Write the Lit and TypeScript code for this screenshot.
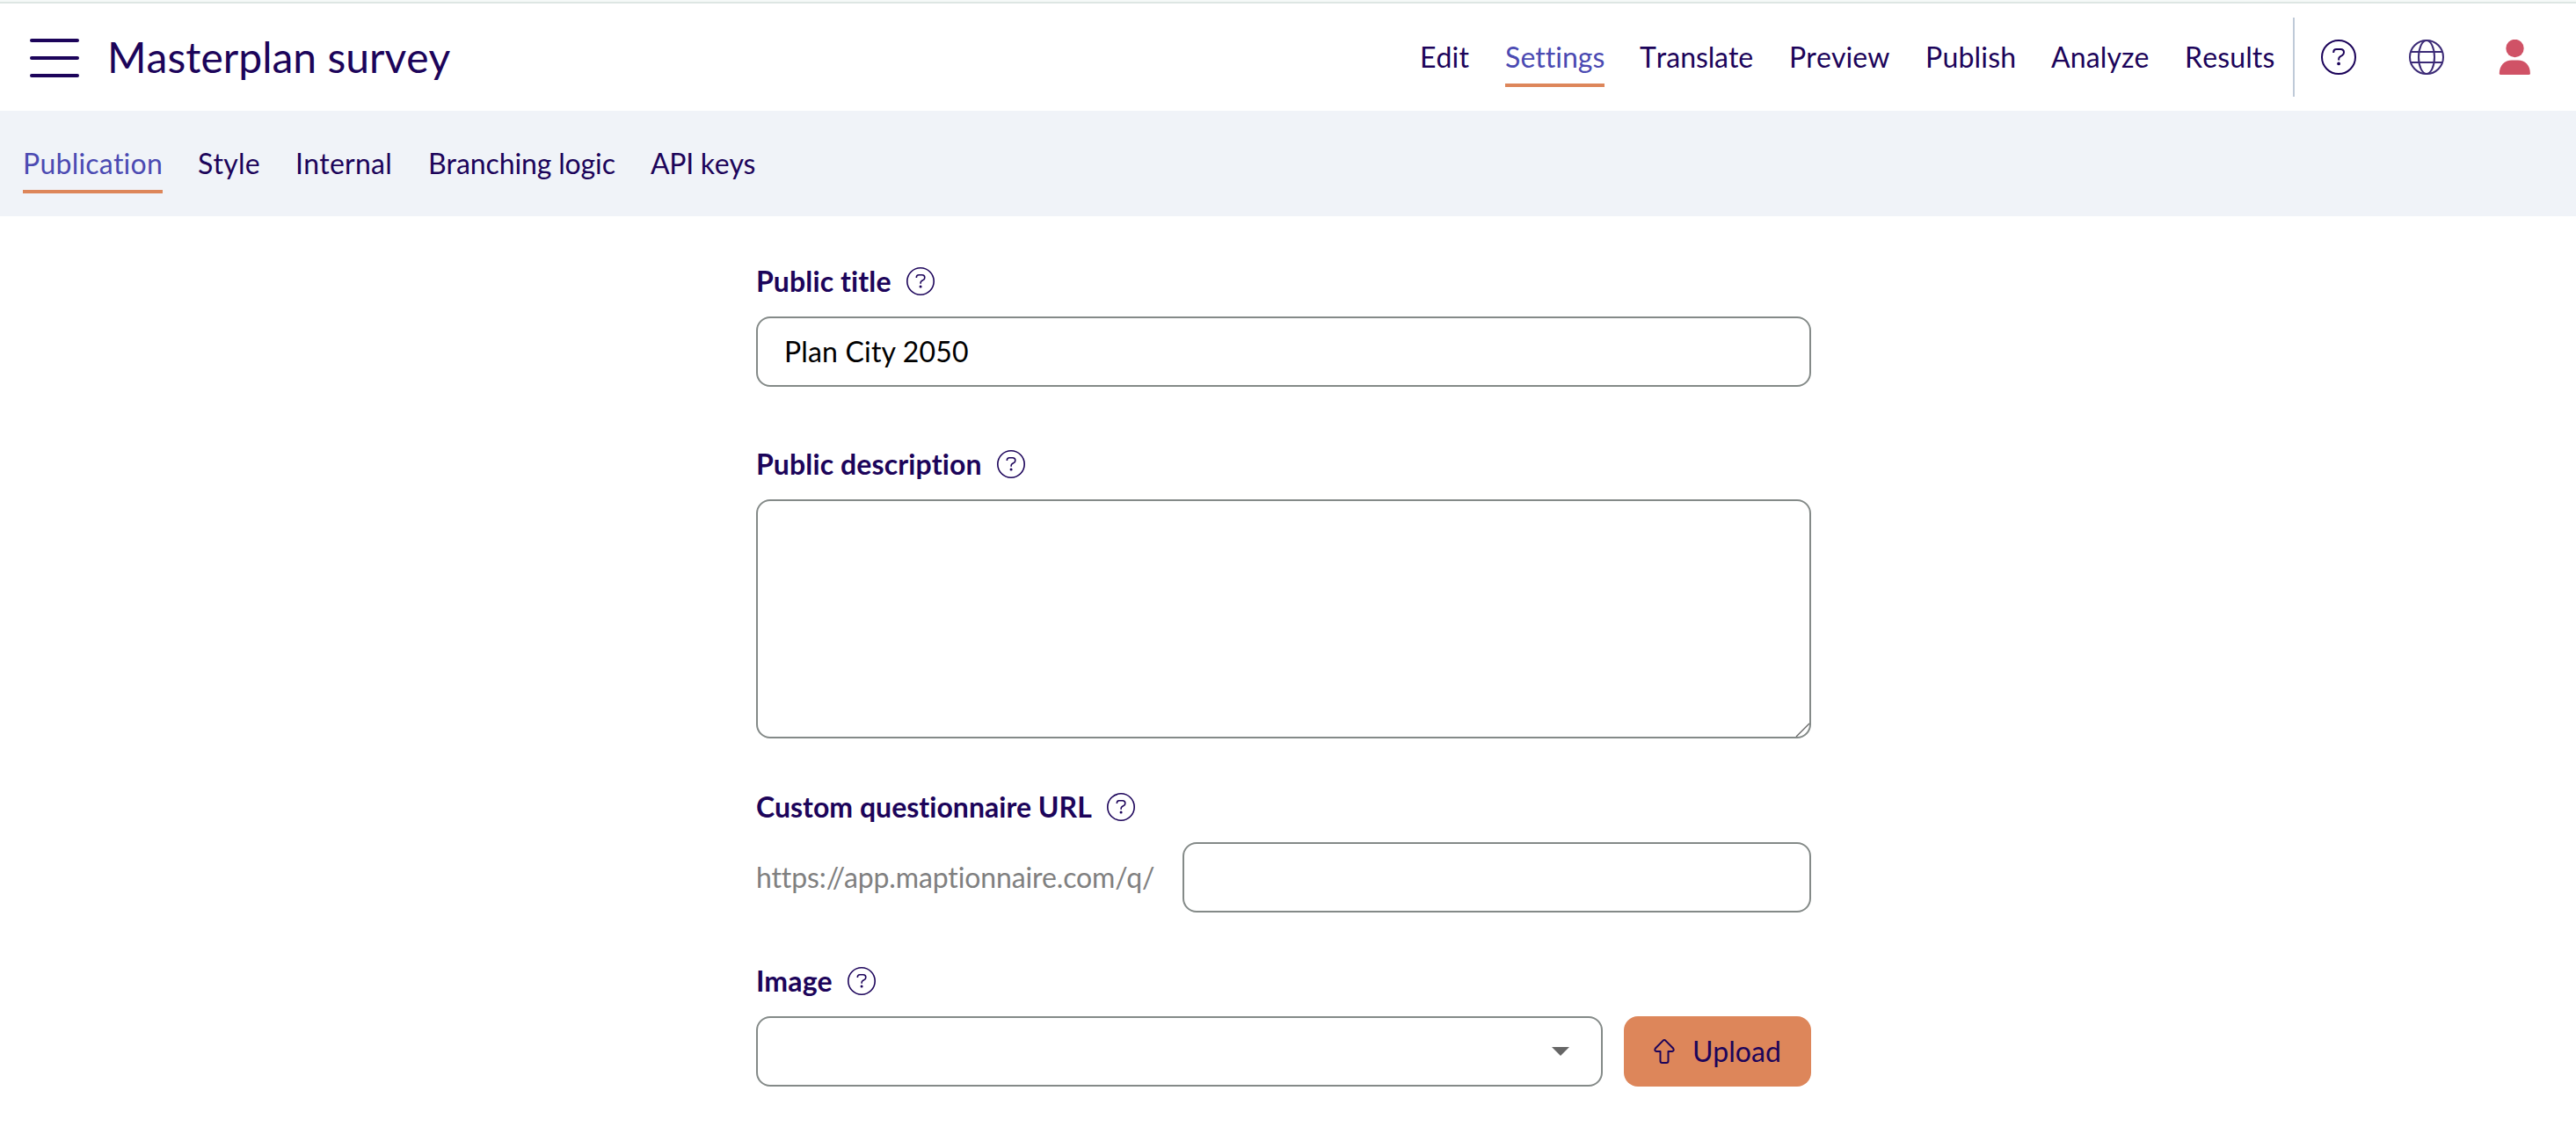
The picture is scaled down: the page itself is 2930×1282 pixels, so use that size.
import { LitElement, html, css } from "lit";
import { customElement, property } from "lit/decorators.js";
import { styleMap } from "lit/directives/style-map.js";

/** label, box width, letter spacing */
type Tab = [string, number, number];

const MAIN_TABS: Tab[] = [
  ["Edit", 57, 0.1],
  ["Settings", 113, 0.02],
  ["Translate", 130, -0.1],
  ["Preview", 115, 0.08],
  ["Publish", 103, 0.2],
  ["Analyze", 112, 0.1],
  ["Results", 103, 0.13],
];

const SETTINGS_TABS: Tab[] = [
  ["Publication", 159, 0.22],
  ["Style", 71, 0.24],
  ["Internal", 111, 0.22],
  ["Branching logic", 213, -0.14],
  ["API keys", 120, -0.3],
];

@customElement("help-icon")
class HelpIcon extends LitElement {
  static styles = css`
    :host { display: block; width: 32px; height: 32px; color: #1c045a; }
    svg { display: block; width: 100%; height: 100%; }
  `;
  render() {
    return html`<svg viewBox="0 0 40 40" fill="none" stroke="currentColor" stroke-width="2">
      <circle cx="20" cy="20" r="19"></circle>
      <path d="M14.2 15V14.4Q14.2 11 17.6 11H22.2Q26 11 26 14.6Q26 17 24 18L21.8 19.3Q20.2 20.2 20.2 22V23.5" stroke-linejoin="round"></path>
      <circle cx="20.1" cy="27.400" r="1.9" fill="currentColor" stroke="none"></circle>
    </svg>`;
  }
}

@customElement("field-label")
class FieldLabel extends LitElement {
  @property() text = "";
  static styles = css`
    :host { display: flex; align-items: center; gap: 17px; height: 40px; font-weight: 700; letter-spacing: 0.12px; color: #1c045a; }
    :host(.tight) { letter-spacing: 0.02px; }
  `;
  render() {
    return html`<span>${this.text}</span><help-icon></help-icon>`;
  }
}

@customElement("nav-tabs")
class NavTabs extends LitElement {
  @property({ attribute: false }) items: Tab[] = [];
  @property() active = "";
  static styles = css`
    :host { display: flex; gap: 40px; font-kerning: none; }
    a { display: block; height: 56px; line-height: 43px; box-sizing: border-box; white-space: nowrap; color: #1c045a; }
    .active { color: #4b4ab2; border-bottom: 4px solid #dd865a; }
  `;
  render() {
    return this.items.map(
      ([label, width, spacing]) => html`<a
        class=${label === this.active ? "active" : ""}
        style=${styleMap({ width: `${width}px`, letterSpacing: `${spacing}px` })}>${label}</a>`,
    );
  }
}

@customElement("app-root")
class AppRoot extends LitElement {
  static styles = css`
    :host { display: block; height: 1282px; overflow: hidden; background: #fff; font: 32px/40px Lato, sans-serif; font-variant-ligatures: none; color: #1c045a; }
    .topline { height: 4px; box-sizing: border-box; background: #f5f9f8; border-bottom: 2px solid #dde6e3; }
    header { display: flex; height: 122px; align-items: flex-start; }
    .burger { display: flex; flex-direction: column; gap: 16px; padding: 40px 0 0 34px; }
    .burger i { display: block; width: 56px; height: 4px; border-radius: 2px; background: #1c045a; }
    h1 { margin: 31px 0 0 32px; font-size: 48px; line-height: 60px; font-weight: 400; font-kerning: none; }
    .main { margin: 39px 20px 0 auto; }
    .tools { display: flex; align-items: center; height: 90px; margin-top: 16px; border-left: 2px solid #bfcad8; padding: 0 50px 0 30px; gap: 60px; box-sizing: border-box; }
    .tools help-icon, .tools svg { width: 40px; height: 40px; display: block; }
    .sub { height: 120px; background: #f0f3f8; box-sizing: border-box; padding: 38px 0 0 26px; }
    main { width: 1200px; margin-left: 860px; display: flex; flex-direction: column; padding-top: 54px; }
    .field { display: flex; flex-direction: column; gap: 20px; }
    .box { box-sizing: border-box; height: 80px; border: 2px solid #848a88; border-radius: 16px; background: #fff; }
    .value { padding: 18px 30px; color: #000; letter-spacing: 0.18px; }
    .area { height: 272px; display: flex; align-items: flex-end; justify-content: flex-end; overflow: hidden; }
    .area svg { display: block; width: 16px; height: 16px; }
    .row { display: flex; align-items: center; }
    .prefix { width: 485px; color: #808080; letter-spacing: -0.12px; }
    .grow { flex: 1; }
    .select { width: 963px; display: flex; align-items: center; justify-content: flex-end; padding-right: 36px; }
    .select svg { display: block; width: 20px; height: 10px; }
    .upload { display: flex; align-items: center; width: 213px; height: 80px; box-sizing: border-box; margin-left: 24px; padding-left: 34px; border-radius: 16px; background: #dd865a; gap: 20px; letter-spacing: 0.1px; }
    .upload svg { display: block; width: 24px; height: 28px; }
    .s1 { margin-top: 68px; }
    .s2 { margin-top: 58px; }
  `;
  render() {
    return html`
      <div class="topline"></div>
      <header>
        <div class="burger"><i></i><i></i><i></i></div>
        <h1>Masterplan survey</h1>
        <nav-tabs class="main" active="Settings" .items=${MAIN_TABS}></nav-tabs>
        <div class="tools">
          <help-icon></help-icon>
          <svg viewBox="0 0 40 40" fill="none" stroke="#3b2a76" stroke-width="2">
            <circle cx="20" cy="20" r="19"></circle>
            <ellipse cx="20" cy="20" rx="9" ry="19"></ellipse>
            <path d="M2 13.900H38M2 26H38"></path>
          </svg>
          <svg viewBox="0 0 40 40" fill="#d05266">
            <circle cx="20.500" cy="10" r="10.200"></circle>
            <path d="M4.500 40Q2.800 40 2.800 38.500C2.800 29 9 23.400 17 23.400H24C32 23.400 37.900 29 37.900 38.500Q37.900 40 36.200 40Z"></path>
          </svg>
        </div>
      </header>
      <div class="sub"><nav-tabs active="Publication" .items=${SETTINGS_TABS}></nav-tabs></div>
      <main>
        <div class="field">
          <field-label text="Public title"></field-label>
          <div class="box value">Plan City 2050</div>
        </div>
        <div class="field s1">
          <field-label text="Public description"></field-label>
          <div class="box area">
            <svg viewBox="0 0 16 16" fill="none" stroke="#666" stroke-width="1.400"><path d="M1 16L16 1M9 16L16 9"></path></svg>
          </div>
        </div>
        <div class="field s2">
          <field-label class="tight" text="Custom questionnaire URL"></field-label>
          <div class="row"><span class="prefix">https://app.maptionnaire.com/q/</span><div class="box grow"></div></div>
        </div>
        <div class="field s2">
          <field-label text="Image"></field-label>
          <div class="row">
            <div class="box select"><svg viewBox="0 0 20 10" fill="#666"><path d="M0 0H20L10 10Z"></path></svg></div>
            <div class="upload">
              <svg viewBox="0 0 24 28" fill="none" stroke="#1c045a" stroke-width="2" stroke-linejoin="round"><path d="M10.700 1.600Q12 .5 13.300 1.600L22.300 10.800Q23.500 13.500 21 14H16.500V25Q16.500 27 14.500 27H9.500Q7.500 27 7.500 25V14H3Q.5 13.500 1.700 10.800Z"></path></svg>
              <span>Upload</span>
            </div>
          </div>
        </div>
      </main>`;
  }
}
